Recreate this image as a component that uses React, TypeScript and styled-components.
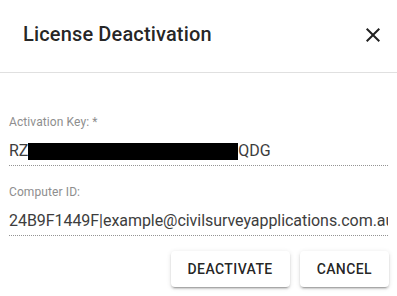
import styled, { createGlobalStyle } from 'styled-components';

const GlobalStyle = createGlobalStyle`
  body {
    margin: 0;
    background: #ffffff;
    font-family: Roboto, "Liberation Sans", Arial, sans-serif;
  }
`

export default function App() {
  return (
    <Dialog>
      <GlobalStyle />
      <Header>
        <Title>License Deactivation</Title>
        <CloseButton aria-label="close">
          <svg width="24" height="24" viewBox="0 0 24 24">
            <path
              fill="#212121"
              d="M19 6.41 17.59 5 12 10.59 6.41 5 5 6.41 10.59 12 5 17.59 6.41 19 12 13.41 17.59 19 19 17.59 13.41 12z"
            />
          </svg>
        </CloseButton>
      </Header>
      <Content>
        <Field>
          <Label>Activation Key: *</Label>
          <Value>
            RZ<Redacted />QDG
          </Value>
        </Field>
        <Field $gap={20}>
          <Label>Computer ID:</Label>
          <Value>24B9F1449F|example@civilsurveyapplications.com.au</Value>
        </Field>
        <Actions>
          <Button>Deactivate</Button>
          <Button>Cancel</Button>
        </Actions>
      </Content>
    </Dialog>
  )
}

const Dialog = styled.div`
  width: 397px;
  height: 296px;
  background: #ffffff;
  overflow: hidden;
`

const Header = styled.div`
  box-sizing: border-box;
  height: 73px;
  display: flex;
  justify-content: space-between;
  align-items: flex-start;
  padding: 18px 12px 0 23px;
  border-bottom: 1px solid #e0e0e0;
`

const Title = styled.h2`
  margin: 0;
  font-size: 20px;
  font-weight: 500;
  line-height: 32px;
  letter-spacing: 0.15px;
  color: rgba(0, 0, 0, 0.87);
`

const CloseButton = styled.button`
  display: flex;
  padding: 0;
  margin-top: 5px;
  border: none;
  background: transparent;
  cursor: pointer;
`

const Content = styled.div`
  padding: 43px 8px 0 9px;
`

const Field = styled.div<{ $gap?: number }>`
  display: flex;
  flex-direction: column;
  margin-top: ${p => p.$gap ?? 0}px;
  margin-right: 1px;
`

const Label = styled.label`
  font-size: 12px;
  line-height: 12px;
  color: #8e8e8e;
  letter-spacing: 0.1px;
`

const Value = styled.div`
  margin-top: 9px;
  padding: 4px 0 5px;
  font-size: 16px;
  line-height: 19px;
  color: #3d3d3d;
  letter-spacing: -0.05px;
  white-space: nowrap;
  overflow: hidden;
  border-bottom: 1px dotted rgba(0, 0, 0, 0.42);
`

const Redacted = styled.span`
  display: inline-block;
  width: 210px;
  height: 17px;
  vertical-align: -4px;
  background: #000000;
`

const Actions = styled.div`
  display: flex;
  justify-content: flex-end;
  gap: 10px;
  margin-top: 15px;
`

const Button = styled.button`
  height: 36px;
  min-width: 64px;
  padding: 6px 17px;
  border: none;
  border-radius: 4px;
  background: #ffffff;
  font-family: Roboto, "Liberation Sans", Arial, sans-serif;
  font-size: 14px;
  font-weight: 500;
  letter-spacing: 0.4px;
  text-transform: uppercase;
  color: rgba(0, 0, 0, 0.87);
  box-shadow: 0 3px 1px -2px rgba(0, 0, 0, 0.2), 0 2px 2px 0 rgba(0, 0, 0, 0.14),
    0 1px 5px 0 rgba(0, 0, 0, 0.12);
  cursor: pointer;
`
